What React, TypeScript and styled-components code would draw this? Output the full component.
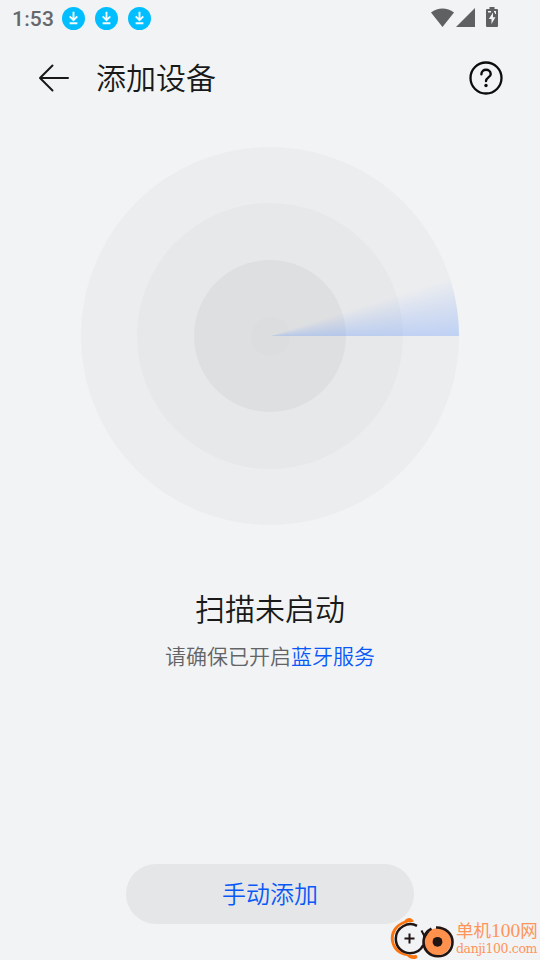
import React from "react";
import styled, { createGlobalStyle } from "styled-components";

const GlobalStyle = createGlobalStyle`
  * { box-sizing: border-box; }
  body { margin: 0; background: #f1f3f5; }
  button { border: 0; padding: 0; background: none; font: inherit; }
  svg { display: block; flex: none; }
`;

const Screen = styled.div`
  position: relative;
  display: flex;
  flex-direction: column;
  align-items: center;
  width: 540px;
  height: 960px;
  overflow: hidden;
  background: #f1f3f5;
  color: #191919;
  font-family: "Noto Sans CJK SC", sans-serif;
  font-weight: 350;
`;

const StatusBar = styled.div`
  display: flex;
  align-items: center;
  justify-content: space-between;
  width: 100%;
  height: 37px;
  padding: 0 42px 0 12px;
`;

const StatusGroup = styled.div<{ $gap: number; $bottom?: number }>`
  display: flex;
  align-items: center;
  gap: ${(p) => p.$gap}px;
  padding-bottom: ${(p) => p.$bottom ?? 0}px;
`;

const Clock = styled.span`
  width: 40px;
  color: #66676a;
  font: 500 21px/24px Roboto, sans-serif;
  letter-spacing: 0.2px;
  white-space: nowrap;
`;

const Header = styled.header`
  display: flex;
  align-items: center;
  width: 100%;
  height: 82px;
  padding: 0 36px 0 37px;
`;

const Title = styled.h1`
  flex: 1;
  margin: 0 0 0 26px;
  padding-bottom: 4px;
  font-size: 30px;
  line-height: 44px;
  font-weight: 350;
`;

const IconButton = styled.button`
  display: flex;
`;

const Radar = styled.div`
  margin-top: 28px;
  width: 378px;
  height: 378px;
  display: grid;
  place-items: center;

  & > * { grid-area: 1 / 1; }
`;

const Ring = styled.div<{ $size: number; $color: string }>`
  width: ${(p) => p.$size}px;
  height: ${(p) => p.$size}px;
  border-radius: 50%;
  background: ${(p) => p.$color};
`;

const Sweep = styled.div`
  width: 378px;
  height: 378px;
  border-radius: 50%;
  background: conic-gradient(
    from 72deg,
    rgba(82, 140, 255, 0) 0deg,
    rgba(82, 140, 255, 0.15) 9deg,
    rgba(82, 140, 255, 0.29) 18deg,
    transparent 18deg
  );
`;

const Message = styled.h2`
  margin: 60px 0 0;
  font-size: 30px;
  line-height: 44px;
  font-weight: 350;
`;

const Hint = styled.p`
  margin: 11px 0 0;
  color: #636466;
  font-size: 21px;
  line-height: 31px;
`;

const HintLink = styled.span`
  color: #0a59f7;
`;

const AddButton = styled.button`
  margin: auto 0 36px;
  width: 288px;
  height: 60px;
  border-radius: 30px;
  background: #e5e6e8;
  color: #0a59f7;
  font-size: 24px;
  line-height: 58px;
  padding-bottom: 2px;
`;

const Watermark = styled.div`
  position: absolute;
  left: 389px;
  top: 916px;
  display: flex;
  color: #ff9559;
`;

const WatermarkText = styled.div`
  display: flex;
  flex-direction: column;
  padding-top: 3px;
  white-space: nowrap;
`;

const SiteName = styled.span`
  height: 22px;
  font: 400 17.5px/22px "Noto Sans CJK SC", sans-serif;
`;

const SiteNumber = styled.span`
  font: 400 19.5px/22px "Liberation Serif", serif;
`;

const SiteDomain = styled.span`
  font: 400 12.5px/15px "DejaVu Serif", serif;
  letter-spacing: -0.38px;
`;

const DownloadIcon = () => (
  <svg width="23" height="23" viewBox="0 0 23 23">
    <circle cx="11.5" cy="11.5" r="11.5" fill="#00beff" />
    <path d="M11.5 4.800v8M7.700 9.300l3.800 3.800 3.800-3.800M7.600 16.300h7.800" fill="none" stroke="#f4fbff" strokeWidth="1.900" />
  </svg>
);

const WifiIcon = () => (
  <svg width="24" height="19" viewBox="0 0 24 20" preserveAspectRatio="none">
    <path d="M0 4.800C7-.9 16-.9 23 4.800L11.500 20Z" fill="#5f6062" />
  </svg>
);

const SignalIcon = () => (
  <svg width="19" height="19" viewBox="0 0 19 19">
    <path d="M19 0v19H0Z" fill="#5f6062" />
  </svg>
);

const BatteryIcon = () => (
  <svg width="12" height="20" viewBox="0 0 12 20">
    <path d="M3.500 0h5v2H11q1 0 1 1v16q0 1-1 1H1q-1 0-1-1V3q0-1 1-1h2.500Z" fill="#5f6062" />
    <path d="M2 4h3v1.500H2ZM8 4h2v3H9V5.500H8ZM7 5.500 2.800 12h2.700v5L9.500 10.200H7Z" fill="#f1f3f5" />
  </svg>
);

const BackIcon = () => (
  <svg width="33" height="32" viewBox="0 0 33 32" fill="none" stroke="#191919" strokeWidth="2" strokeLinecap="round" strokeLinejoin="round">
    <path d="M31 16H3M15.500 3.500 3 16l12.500 12.500" />
  </svg>
);

const HelpIcon = () => (
  <svg width="36" height="36" viewBox="0 0 36 36" fill="none" stroke="#0c0c0c" strokeLinecap="round">
    <circle cx="18" cy="18" r="15.500" strokeWidth="2.300" />
    <path d="M13.400 14.300C13.400 8.100 22.700 8.300 22.700 14.200C22.700 17.200 18 17.700 18 21" strokeWidth="2.400" />
    <circle cx="18" cy="25.500" r="1.700" fill="#0c0c0c" stroke="none" />
  </svg>
);

const WatermarkLogo = () => (
  <svg width="67" height="44" viewBox="0 0 67 44" fill="none">
    <path d="M25 5.500C22.500 1.200 18.500 1 15.500 4.700C5 8.500 .4 17 2.200 26C4 34 10 39 18 40C21 43.500 26 44 28.500 41.500L27.500 39C17 40 7.500 35 5 26C3.500 17 8.500 9.500 17 7C20 5.700 22 6.500 25 5.500Z" fill="#ff730c" />
    <circle cx="48.500" cy="25.800" r="13.500" fill="#ff914d" />
    <path d="M47 11.500C57 11.300 63.500 18 63.500 26C63.500 34.500 57 40.300 49 40.300C40 40.300 33.800 33 34.600 24.500C35 19 38.200 14.700 42.500 12.600" stroke="#211514" strokeWidth="2.600" />
    <circle cx="48.500" cy="25.800" r="4.900" fill="#211514" />
    <path d="M28 9.800C19 5 7 11.500 6.800 22.500C6.700 31.500 13.500 37.200 21 37.200C27 37.200 31.800 34.200 34.300 29" stroke="#211514" strokeWidth="2.500" />
    <path d="M32.500 14.500 35.800 21 39.800 14.500M20.500 17.500v10M15.500 22.500h10" stroke="#211514" strokeWidth="2" />
  </svg>
);

const rings = [
  { size: 378, color: "#ecedef" },
  { size: 266, color: "#e7e8ea" },
  { size: 152, color: "#dedfe1" },
  { size: 39, color: "#dcddde" },
];

export default function App() {
  return (
    <Screen>
      <GlobalStyle />
      <StatusBar>
        <StatusGroup $gap={10}>
          <Clock>1:53</Clock>
          <DownloadIcon />
          <DownloadIcon />
          <DownloadIcon />
        </StatusGroup>
        <StatusGroup $gap={11} $bottom={3}>
          <StatusGroup $gap={1}>
            <WifiIcon />
            <SignalIcon />
          </StatusGroup>
          <BatteryIcon />
        </StatusGroup>
      </StatusBar>
      <Header>
        <IconButton aria-label="返回"><BackIcon /></IconButton>
        <Title>添加设备</Title>
        <IconButton aria-label="帮助"><HelpIcon /></IconButton>
      </Header>
      <Radar>
        {rings.map((ring) => (
          <Ring key={ring.size} $size={ring.size} $color={ring.color} />
        ))}
        <Sweep />
      </Radar>
      <Message>扫描未启动</Message>
      <Hint>请确保已开启<HintLink>蓝牙服务</HintLink></Hint>
      <AddButton>手动添加</AddButton>
      <Watermark>
        <WatermarkLogo />
        <WatermarkText>
          <SiteName>单机<SiteNumber>100</SiteNumber>网</SiteName>
          <SiteDomain>danji100.com</SiteDomain>
        </WatermarkText>
      </Watermark>
    </Screen>
  );
}
